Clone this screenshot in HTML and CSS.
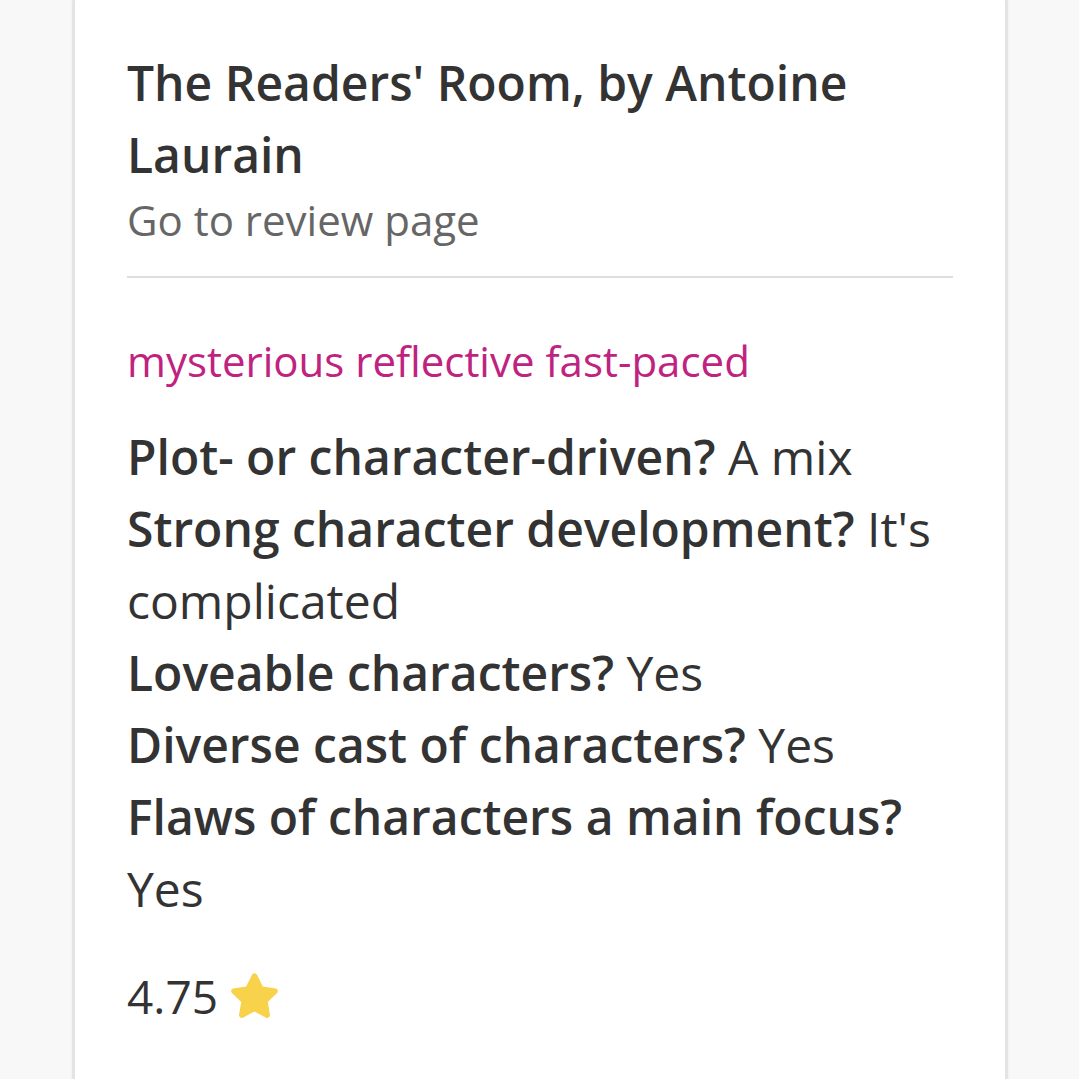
FILE: index.html
```html
<!DOCTYPE html>
<html lang="en">
<head>
<meta charset="utf-8">
<link rel="stylesheet" href="styles.css">
</head>
<body>
<div class="card">
  <div class="head">
    <h1 class="title">The Readers' Room, by Antoine Laurain</h1>
    <div class="sub">Go to review page</div>
  </div>
  <div class="tags">mysterious reflective fast-paced</div>
  <div class="qa">
    <p><span class="q">Plot- or character-driven?</span> A mix</p>
    <p><span class="q">Strong character development?</span> It's complicated</p>
    <p><span class="q">Loveable characters?</span> Yes</p>
    <p><span class="q">Diverse cast of characters?</span> Yes</p>
    <p><span class="q">Flaws of characters a main focus?</span> Yes</p>
  </div>
  <div class="rating">
    <span>4.75</span>
    <svg class="star" viewBox="0 0 24 24" width="57" height="57" aria-hidden="true">
      <path d="M12 2.2c.5 0 .9.3 1.1.7l2.4 4.9 5.4.8c.9.1 1.3 1.3.6 1.9l-3.9 3.8.9 5.4c.2.9-.8 1.6-1.6 1.2L12 18.3l-4.9 2.6c-.8.4-1.8-.3-1.6-1.2l.9-5.4-3.9-3.800c-.7-.6-.3-1.8.6-1.9l5.4-.8 2.4-4.9c.2-.4.6-.7 1.1-.7z" fill="#f8d24a"/>
    </svg>
  </div>
</div>
</body>
</html>
```

FILE: styles.css
```css
html, body {
  margin: 0;
  padding: 0;
  background: #f8f8f8;
}
body {
  font-family: "Open Sans", "Noto Sans", sans-serif;
  color: #333;
  overflow: hidden;
  height: 1079px;
}
.card {
  box-sizing: border-box;
  width: 936px;
  margin: -22px 0 0 72px;
  min-height: 1200px;
  background: #fff;
  border: 3px solid #e4e4e4;
  border-radius: 26px;
  box-shadow: 0 0 3px rgba(0,0,0,0.06);
  padding: 66px 52px 0 52px;
}
.head {
  border-bottom: 2px solid #dedede;
  padding-bottom: 25px;
}
.title {
  margin: 0;
  font-size: 48px;
  font-weight: 600;
  line-height: 72px;
  color: #333;
}
.sub {
  font-size: 42px;
  line-height: 62px;
  color: #666;
  margin-top: -2px;
}
.tags {
  margin-top: 53px;
  font-size: 42px;
  line-height: 60px;
  color: #c0237f;
}
.qa {
  margin-top: 30px;
}
.qa p {
  margin: 0;
  font-size: 48px;
  line-height: 72px;
}
.q {
  font-weight: 600;
}
.rating {
  margin-top: 37px;
  display: flex;
  align-items: center;
  gap: 8px;
  font-size: 46px;
  line-height: 69px;
}
.star {
  display: block;
}
```
